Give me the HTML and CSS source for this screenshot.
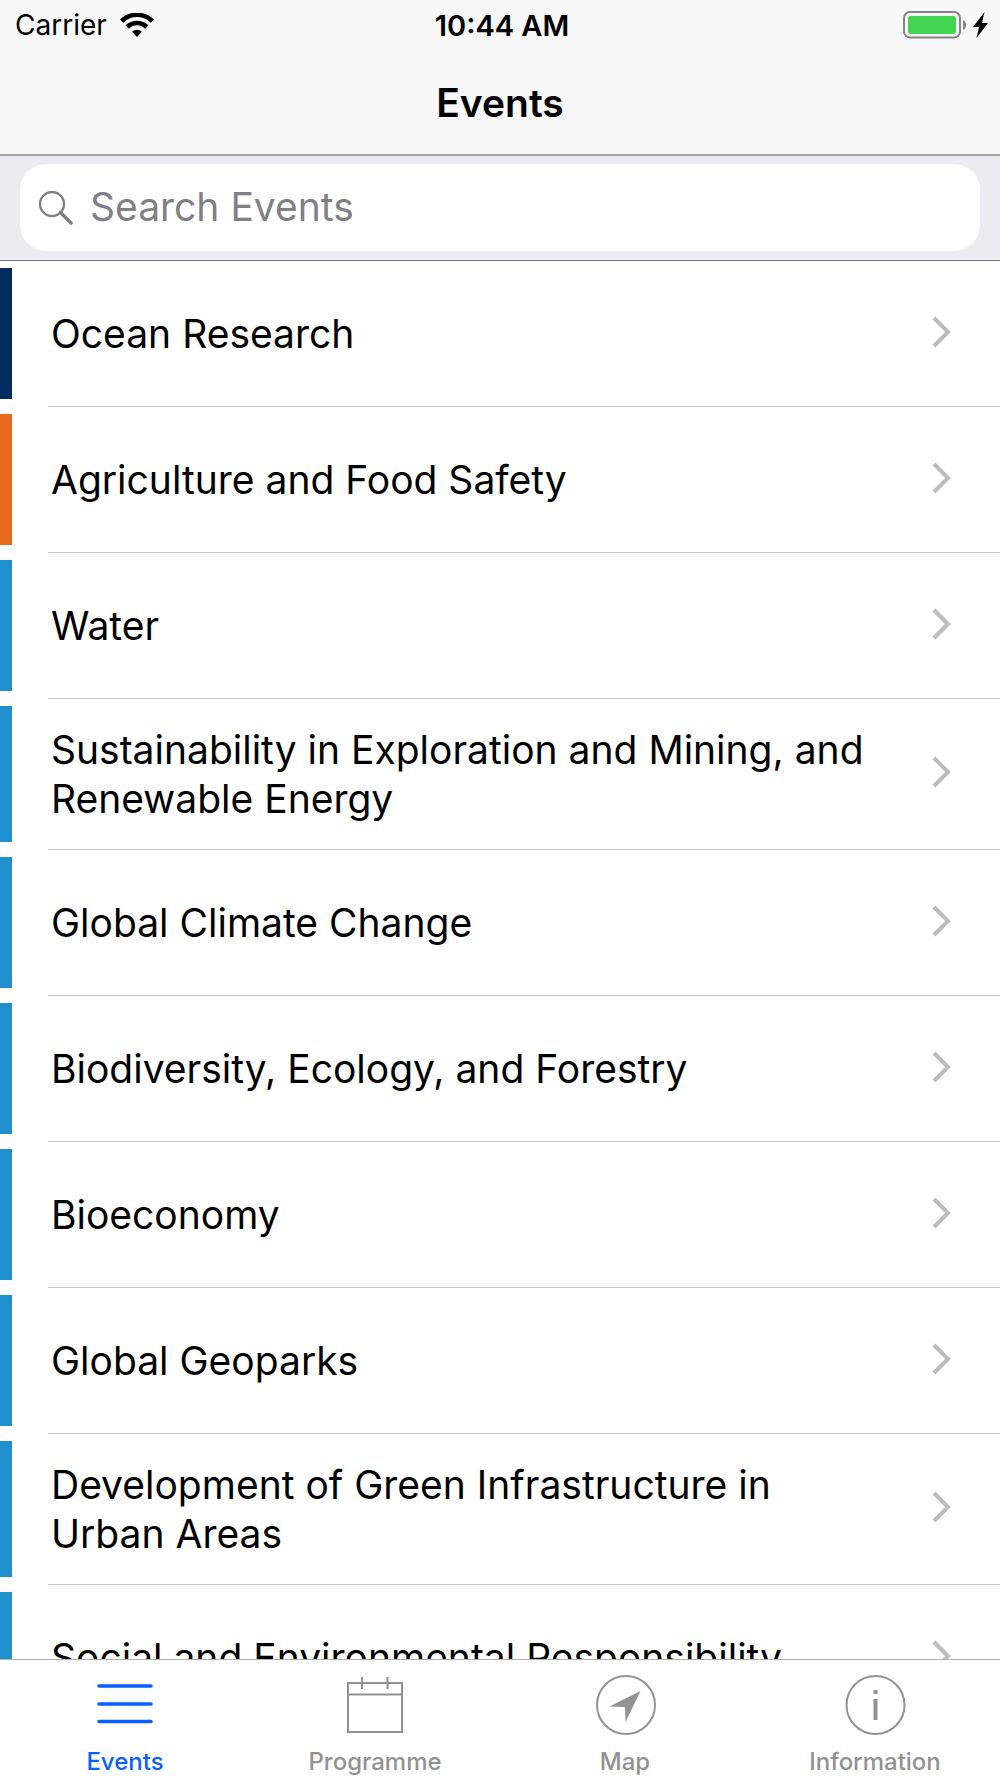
FILE: index.html
```
<!DOCTYPE html>
<html lang="en">
<head>
    <meta charset="UTF-8">
    <meta name="viewport" content="width=device-width, initial-scale=1.0">
    <title>Events</title>
    <link rel="stylesheet" href="styles.css">
</head>
<body>
    <!-- Shared row arrow -->
    <svg class="defs" width="0" height="0" aria-hidden="true">
        <symbol id="chevron" viewBox="0 0 20 32">
            <path d="M2 2L16 16L2 30" fill="none" stroke="#bbbbc1" stroke-width="4"/>
        </symbol>
    </svg>

    <header class="header">
        <div class="status-bar">
            <div class="carrier">
                <span>Carrier</span>
                <svg width="34" height="24" viewBox="0 0 34 24">
                    <g fill="none" stroke="#000" stroke-width="4.6">
                        <path d="M1.6 8.1A22 22 0 0 1 32.4 8.1"/>
                        <path d="M7.2 14A14 14 0 0 1 26.8 14"/>
                    </g>
                    <path d="M17 24L12.1 18.7A7 7 0 0 1 21.9 18.7Z"/>
                </svg>
            </div>
            <time class="time">10:44 AM</time>
            <div class="battery">
                <svg width="86" height="28" viewBox="0 0 86 28">
                    <rect x="1" y="1" width="56" height="25.5" rx="6" fill="none" stroke="#858585" stroke-width="2"/>
                    <rect x="5" y="5" width="48" height="18" rx="3" fill="#43d551"/>
                    <path d="M60 9C64 10 64 18 60 19Z" fill="#858585"/>
                    <path d="M81.5 1L70 16H76L73.5 27L85 12H79Z"/>
                </svg>
            </div>
        </div>
        <h1>Events</h1>
    </header>

    <form class="search-bar">
        <label class="search-field">
            <svg width="34" height="34" viewBox="0 0 34 34" fill="none" stroke="#7f7f85">
                <circle cx="13" cy="13" r="12" stroke-width="2.4"/>
                <path d="M21.5 21.5L32 32" stroke-width="3.6" stroke-linecap="round"/>
            </svg>
            <input type="text" placeholder="Search Events" aria-label="Search Events">
        </label>
    </form>

    <main class="content">
        <ul class="event-list">
            <li class="navy"><a href="#"><span>Ocean Research</span><svg><use href="#chevron"/></svg></a></li>
            <li class="orange"><a href="#"><span>Agriculture and Food Safety</span><svg><use href="#chevron"/></svg></a></li>
            <li><a href="#"><span>Water</span><svg><use href="#chevron"/></svg></a></li>
            <li><a href="#"><span>Sustainability in Exploration and Mining, and Renewable Energy</span><svg><use href="#chevron"/></svg></a></li>
            <li><a href="#"><span>Global Climate Change</span><svg><use href="#chevron"/></svg></a></li>
            <li><a href="#"><span>Biodiversity, Ecology, and Forestry</span><svg><use href="#chevron"/></svg></a></li>
            <li><a href="#"><span>Bioeconomy</span><svg><use href="#chevron"/></svg></a></li>
            <li><a href="#"><span>Global Geoparks</span><svg><use href="#chevron"/></svg></a></li>
            <li><a href="#"><span>Development of Green Infrastructure in Urban Areas</span><svg><use href="#chevron"/></svg></a></li>
            <li><a href="#"><span>Social and Environmental Responsibility</span><svg><use href="#chevron"/></svg></a></li>
        </ul>
    </main>

    <nav class="tab-bar">
        <a href="#" class="active">
            <svg width="62" height="62" viewBox="0 0 62 62" fill="none" stroke="currentColor" stroke-width="3.6" stroke-linecap="round">
                <path d="M5 12H57M5 30H57M5 47.5H57"/>
            </svg>
            <span>Events</span>
        </a>
        <a href="#">
            <svg width="62" height="62" viewBox="0 0 62 62" fill="none" stroke="currentColor" stroke-width="2">
                <path d="M4 9H58V58H4ZM4 20.5H58M18 3V15M43.5 3V15"/>
            </svg>
            <span>Programme</span>
        </a>
        <a href="#">
            <svg width="62" height="62" viewBox="0 0 62 62">
                <circle cx="32" cy="31" r="29" fill="none" stroke="currentColor" stroke-width="2"/>
                <path d="M46.5 17L15.5 32.5L31 33L31.5 48Z" fill="currentColor"/>
            </svg>
            <span>Map</span>
        </a>
        <a href="#">
            <svg width="62" height="62" viewBox="0 0 62 62">
                <circle cx="31.5" cy="31" r="29" fill="none" stroke="currentColor" stroke-width="2"/>
                <path d="M29.5 16H33.5V20H29.5ZM29.5 25H33.5V46H29.5Z" fill="currentColor"/>
            </svg>
            <span>Information</span>
        </a>
    </nav>
</body>
</html>
```
FILE: styles.css
```
* {
    box-sizing: border-box;
}
body {
    margin: 0;
    height: 100vh;
    display: flex;
    flex-direction: column;
    font-family: Inter, sans-serif;
    font-size: 39px;
    color: #000;
    background-color: #fff;
}
svg {
    display: block;
    flex: none;
}
.defs {
    position: absolute;
}
a {
    color: inherit;
    text-decoration: none;
}
.header {
    background-color: #f7f7f7;
    border-bottom: 2px solid #a5a5a7;
}
.status-bar {
    display: flex;
    align-items: center;
    height: 50px;
    padding: 0 11px 0 15px;
    font-size: 28px;
}
.carrier,
.battery {
    flex: 1;
    display: flex;
    align-items: center;
    gap: 13px;
}
.battery {
    justify-content: flex-end;
}
.time {
    font-size: 29px;
    font-weight: 600;
}
.header h1 {
    margin: 0;
    padding-top: 2px;
    line-height: 102px;
    font-size: 39px;
    font-weight: 600;
    text-align: center;
}
.search-bar {
    padding: 8px 20px 9px;
    background-color: #ebebf1;
    border-bottom: 1px solid #77777c;
}
.search-field {
    display: flex;
    align-items: center;
    gap: 17px;
    height: 87px;
    padding: 0 19px;
    border-radius: 26px;
    background-color: #fff;
}
.search-field input {
    flex: 1;
    min-width: 0;
    padding: 0 0 2px;
    border: 0;
    outline: 0;
    background: none;
    font: inherit;
}
.search-field input::placeholder {
    color: #7f7f85;
    opacity: 1;
}
.content {
    flex: 1;
    min-height: 0;
    overflow: hidden;
}
.event-list {
    margin: 0;
    padding: 0;
    list-style: none;
}
.event-list li {
    display: flex;
    align-items: stretch;
}
.event-list li::before {
    content: "";
    width: 12px;
    margin: 7px 36px 8px 0;
    background-color: #1f90cd;
}
.event-list .navy::before {
    background-color: #032d5e;
}
.event-list .orange::before {
    background-color: #e8681d;
}
.event-list a {
    flex: 1;
    display: flex;
    align-items: center;
    justify-content: space-between;
    gap: 40px;
    min-height: 146px;
    padding: 26px 48px 26px 3px;
    border-bottom: 1px solid #c8c7cc;
    line-height: 49px;
}
.event-list svg {
    width: 20px;
    height: 32px;
    margin-bottom: 4px;
}
.tab-bar {
    display: flex;
    height: 119px;
    border-top: 1px solid #b2b2b2;
    background-color: #fff;
}
.tab-bar a {
    flex: 1;
    display: flex;
    flex-direction: column;
    align-items: center;
    gap: 11px;
    padding-top: 14px;
    color: #929292;
    font-size: 24px;
    font-weight: 500;
    line-height: 30px;
}
.tab-bar .active {
    color: #0a60ff;
}
```
